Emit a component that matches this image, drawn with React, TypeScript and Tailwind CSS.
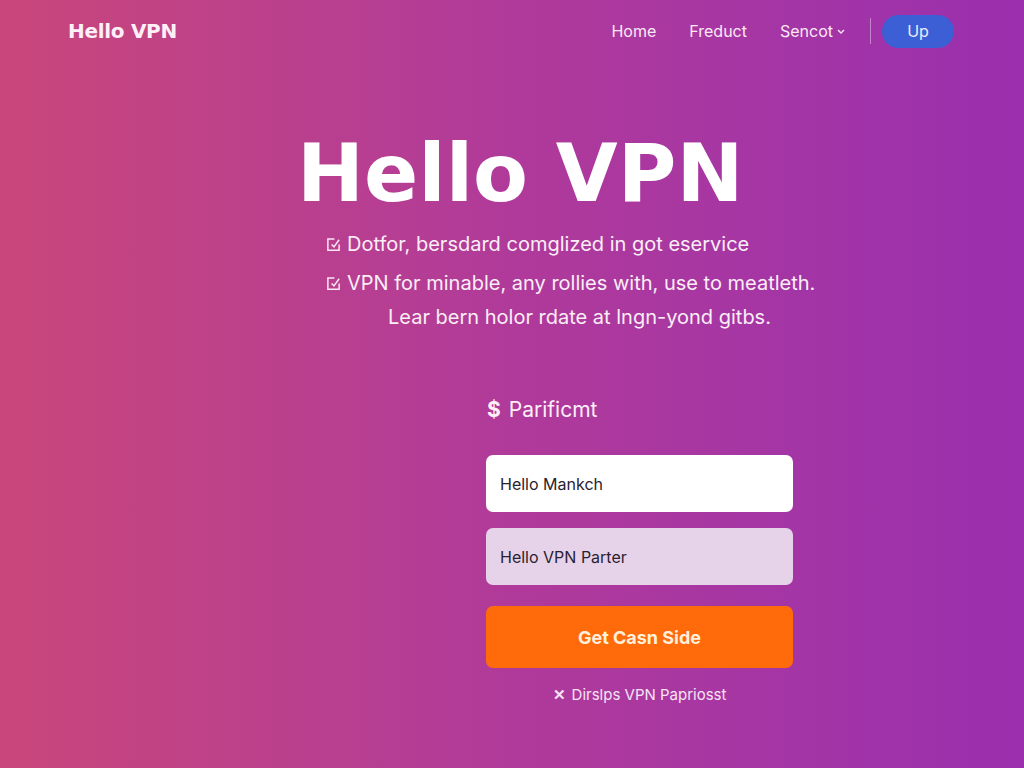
import React from "react";

function CheckIcon() {
  return (
    <svg width="15" height="15" viewBox="0 0 16 16" fill="none" className="mr-[6px] shrink-0">
      <path d="M9 2H2v12h12V8" stroke="#fde7f3" strokeWidth="1.6" />
      <path d="M6 8l2.5 2.5L14 3" stroke="#fde7f3" strokeWidth="1.6" />
    </svg>
  );
}

export default function App() {
  return (
    <div
      className="w-[1024px] h-[768px] overflow-hidden bg-gradient-to-r from-[#c9467a] via-[#b03a9a] to-[#9a2fae] text-white"
      style={{ fontFamily: "Inter, 'Noto Sans', sans-serif" }}
    >
      <header className="flex items-center h-[62px] pl-[68px] pr-[70px]">
        <div className="text-[20px] font-bold tracking-[-0.3px] text-[#fdf0f7] font-['DejaVu_Sans',sans-serif]">
          Hello VPN
        </div>
        <nav className="ml-auto flex items-center text-[16px] text-[#fbe9f5]">
          <span className="mr-[33px]">Home</span>
          <span className="mr-[33px]">Freduct</span>
          <span className="flex items-center">
            Sencot
            <svg width="10" height="10" viewBox="0 0 10 10" className="ml-[3px]" fill="none">
              <path d="M2 4l3 3 3-3" stroke="#fbe9f5" strokeWidth="1.4" />
            </svg>
          </span>
          <span className="ml-[24px] mr-[11px] w-px h-[26px] bg-white/40" />
          <span className="flex items-center justify-center w-[72px] h-[33px] rounded-full bg-[#3c5fd6] text-[#e8eeff]">
            Up
          </span>
        </nav>
      </header>

      <section className="flex flex-col">
        <h1 className="mt-[62px] pl-[297px] text-[80px] font-bold leading-[100px] text-white font-['DejaVu_Sans',sans-serif]">
          Hello VPN
        </h1>
        <div className="mt-[8px] pl-[326px] text-[20px] text-[#fbeef7] leading-[24px]">
          <div className="flex items-center">
            <CheckIcon />
            Dotfor, bersdard comglized in got eservice
          </div>
          <div className="flex items-center mt-[15px]">
            <CheckIcon />
            VPN for minable, any rollies with, use to meatleth.
          </div>
          <div className="mt-[10px] pl-[62px]">Lear bern holor rdate at lngn-yond gitbs.</div>
        </div>
      </section>

      <section className="mt-[67px] ml-[486px] w-[307px] flex flex-col">
        <div className="pl-[1px] text-[21px] text-[#fdeef8] leading-[28px] flex items-center">
          <span className="font-bold mr-[8px]">$</span>Parificmt
        </div>
        <div className="mt-[31px] h-[57px] rounded-[7px] bg-white flex items-center pl-[14px] text-[16px] text-[#2a2230]">
          Hello Mankch
        </div>
        <div className="mt-[16px] h-[57px] rounded-[7px] bg-[#e6d3ea] flex items-center pl-[14px] text-[16px] text-[#2a2230]">
          Hello VPN Parter
        </div>
        <div className="mt-[21px] h-[62px] rounded-[7px] bg-[#ff6a0a] flex items-center justify-center text-[18px] font-bold text-[#fff0dc]">
          Get Casn Side
        </div>
        <div className="mt-[16px] flex items-center justify-center text-[15px] text-[#f6e3f5]">
          <span className="mr-[6px] font-bold">✕</span>Dirslps VPN Papriosst
        </div>
      </section>
    </div>
  );
}
